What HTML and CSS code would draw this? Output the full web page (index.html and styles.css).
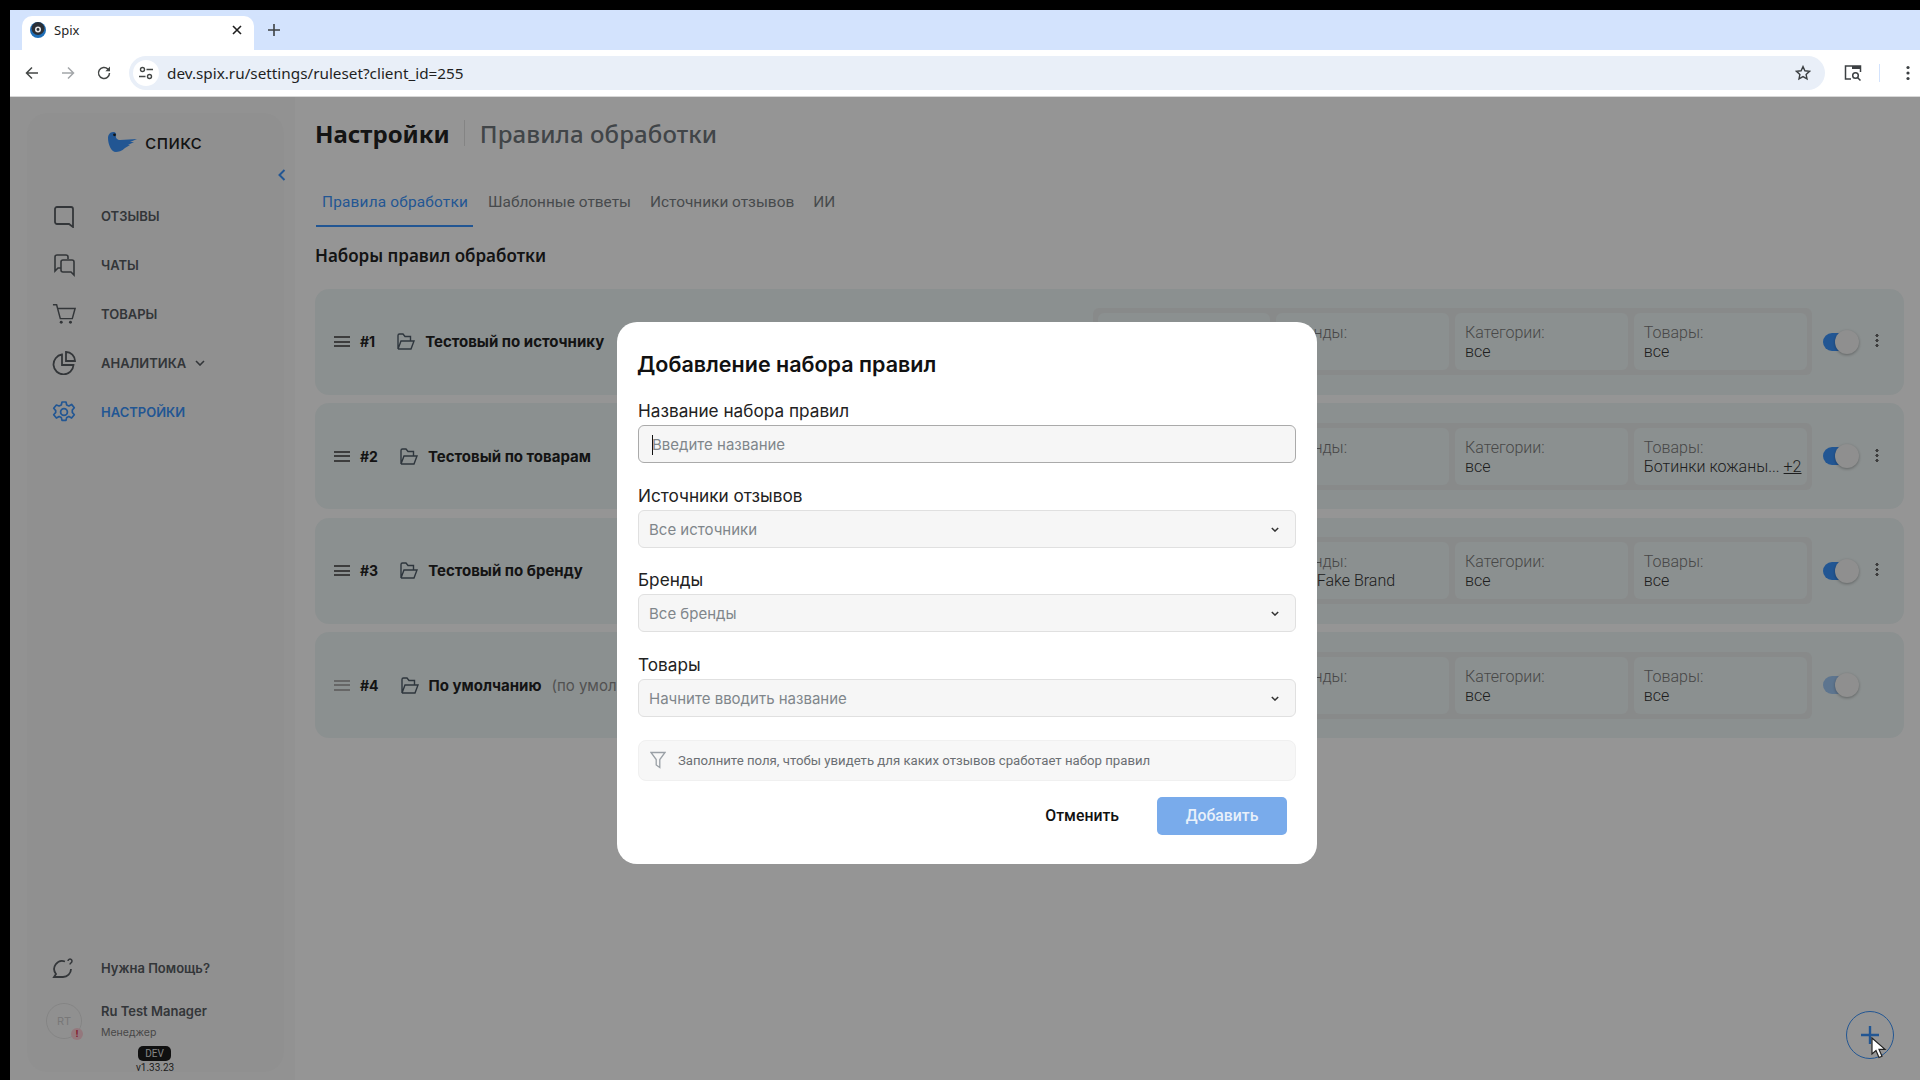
FILE: index.html
```html
<!DOCTYPE html>
<html lang="ru">

<head>
    <meta charset="UTF-8">
    <meta name="viewport" content="width=device-width, initial-scale=1.0">
    <title>Spix</title>
    <link rel="stylesheet" href="styles.css">
</head>

<body>
    <div class="browser">
        <div class="tabstrip">
            <div class="tab">
                <svg class="favicon" width="16" height="16" viewBox="0 0 16 16">
                    <circle cx="8" cy="8" r="8" fill="#1f6fb8" />
                    <circle cx="8" cy="6.5" r="6.5" fill="#2b2f36" />
                    <circle cx="8" cy="7.5" r="3" fill="#e8e8e8" />
                    <circle cx="8" cy="7.5" r="1.4" fill="#2b2f36" />
                </svg>
                <span class="tab-title">Spix</span>
                <svg class="tab-close" width="10" height="10" viewBox="0 0 10 10">
                    <path d="M1 1l8 8M9 1l-8 8" stroke="#1f1f1f" stroke-width="1.6" />
                </svg>
            </div>
            <svg class="tab-new" width="12" height="12" viewBox="0 0 12 12">
                <path d="M6 0v12M0 6h12" stroke="#3c4043" stroke-width="1.6" />
            </svg>
        </div>
        <div class="toolbar">
            <svg class="tool-icon" width="16" height="16" viewBox="0 0 16 16">
                <path d="M14 8H2.5M8 2.5L2.5 8 8 13.5" fill="none" stroke="#444746" stroke-width="1.5" />
            </svg>
            <svg class="tool-icon" width="16" height="16" viewBox="0 0 16 16">
                <path d="M2 8h11.5M8 2.5L13.5 8 8 13.5" fill="none" stroke="#a3a6a9" stroke-width="1.5" />
            </svg>
            <svg class="tool-icon" width="16" height="16" viewBox="0 0 16 16">
                <path d="M13.5 8a5.5 5.5 0 1 1-1.6-3.9L13.5 5.7" fill="none" stroke="#444746" stroke-width="1.5" />
                <path d="M14 1.6v4.6H9.4z" fill="#444746" />
            </svg>
            <div class="omnibox">
                <span class="site-btn">
                    <svg width="16" height="16" viewBox="0 0 16 16">
                        <circle cx="4.5" cy="4.5" r="2" fill="none" stroke="#444746" stroke-width="1.4" />
                        <circle cx="11.5" cy="11.5" r="2" fill="none" stroke="#444746" stroke-width="1.4" />
                        <path d="M8.5 4.5H15M1 11.5h6.5" stroke="#444746" stroke-width="1.4" />
                    </svg>
                </span>
                <span class="url">dev.spix.ru/settings/ruleset?client_id=255</span>
                <svg class="star" width="16" height="16" viewBox="0 0 16 16">
                    <path d="M8 1.6l1.9 4.2 4.6.5-3.4 3.1.9 4.5-4-2.3-4 2.3.9-4.5-3.4-3.1 4.6-.5z" fill="none"
                        stroke="#3c4043" stroke-width="1.4" />
                </svg>
            </div>
            <svg class="lens" width="18" height="18" viewBox="0 0 18 18">
                <path d="M7 15H1.5V2h15v6" fill="none" stroke="#3c4043" stroke-width="1.5" />
                <rect x="8" y="2" width="8.5" height="3" fill="#3c4043" />
                <circle cx="11.5" cy="11.5" r="2.8" fill="none" stroke="#3c4043" stroke-width="1.5" />
                <path d="M13.5 13.5l3 3" stroke="#3c4043" stroke-width="1.5" />
            </svg>
            <span class="tool-sep"></span>
            <svg class="more" width="4" height="16" viewBox="0 0 4 16">
                <circle cx="2" cy="2.5" r="1.6" fill="#3c4043" />
                <circle cx="2" cy="8" r="1.6" fill="#3c4043" />
                <circle cx="2" cy="13.5" r="1.6" fill="#3c4043" />
            </svg>
        </div>

        <div class="page">
            <aside class="sidebar">
                <div class="sidebar-card">
                    <div class="logo">
                        <svg width="29" height="20" viewBox="0 0 29 20">
                            <path d="M0 6C0 3 2 0 5 0c3 0 3.500 2 3 4-.5 2 1.500 4 4 4l17-1-7 3h4l-6 3h2l-5 3c-3 3-7 4-9 4C3 20 0 12 0 6z"
                                fill="#3a90f5" />
                            <circle cx="6.500" cy="2.800" r="1.400" fill="#222" />
                        </svg>
                        <span class="logo-text">спикс</span>
                    </div>
                    <span class="collapse">
                        <svg width="8" height="12" viewBox="0 0 8 12">
                            <path d="M6.5 1L1.5 6l5 5" fill="none" stroke="#3a90f5" stroke-width="2" />
                        </svg>
                    </span>
                    <nav class="nav">
                        <a class="nav-item">
                            <svg width="24" height="24" viewBox="0 0 24 24">
                                <path d="M5 3h14a2 2 0 0 1 2 2v18l-4-3H5a2 2 0 0 1-2-2V5a2 2 0 0 1 2-2z" fill="none"
                                    stroke="currentColor" stroke-width="1.8" />
                            </svg>
                            <span>Отзывы</span>
                        </a>
                        <a class="nav-item">
                            <svg width="24" height="24" viewBox="0 0 24 24">
                                <path d="M16 6V4a2 2 0 0 0-2-2H5a2 2 0 0 0-2 2v14l3-3h3" fill="none" stroke="currentColor"
                                    stroke-width="1.6" />
                                <path d="M11 7h9a2 2 0 0 1 2 2v13l-3-3h-8a2 2 0 0 1-2-2V9a2 2 0 0 1 2-2z" fill="none"
                                    stroke="currentColor" stroke-width="1.6" />
                            </svg>
                            <span>Чаты</span>
                        </a>
                        <a class="nav-item">
                            <svg width="26" height="24" viewBox="0 0 26 24">
                                <path d="M1 2h4l4 15h13l3-11H6" fill="none" stroke="currentColor" stroke-width="1.6" />
                                <circle cx="10" cy="21" r="1.6" fill="currentColor" />
                                <circle cx="20" cy="21" r="1.6" fill="currentColor" />
                            </svg>
                            <span>Товары</span>
                        </a>
                        <a class="nav-item">
                            <svg width="24" height="24" viewBox="0 0 24 24">
                                <path d="M10 3.500A10 10 0 1 0 21.500 14H10z" fill="none" stroke="currentColor" stroke-width="1.8" />
                                <path d="M14 1a9 9 0 0 1 9 9h-9z" fill="none" stroke="currentColor" stroke-width="1.8" />
                            </svg>
                            <span>Аналитика</span>
                            <svg class="nav-caret" width="10" height="6" viewBox="0 0 10 6">
                                <path d="M1 1l4 4 4-4" fill="none" stroke="currentColor" stroke-width="1.6" />
                            </svg>
                        </a>
                        <a class="nav-item active">
                            <svg width="24" height="24" viewBox="0 0 24 24">
                                <path d="M10 2h4l.7 3 2.200 1 2.700-1.600 2.700 3.300-2 2.300v2.400l2 2.300-2.700 3.300-2.700-1.600-2.200 1-.7 3h-4l-.7-3-2.200-1-2.700 1.600-2.700-3.300 2-2.300V10.600l-2-2.300 2.700-3.300L7.100 6l2.200-1z"
                                    fill="none" stroke="currentColor" stroke-width="1.7" stroke-linejoin="round" />
                                <circle cx="12" cy="12" r="3.400" fill="none" stroke="currentColor" stroke-width="1.8" />
                            </svg>
                            <span>Настройки</span>
                        </a>
                    </nav>
                    <div class="sidebar-bottom">
                        <a class="help">
                            <svg width="22" height="22" viewBox="0 0 22 22">
                                <path d="M13 4.500A8 8 0 0 0 4 17l-2 3h9a8 8 0 0 0 8-8" fill="none" stroke="currentColor"
                                    stroke-width="1.8" />
                                <path d="M16 4a2 2 0 1 1 3 1.800c-.8.5-1 .8-1 1.700" fill="none" stroke="currentColor"
                                    stroke-width="1.5" />
                            </svg>
                            <span>Нужна Помощь?</span>
                        </a>
                        <div class="user">
                            <div class="avatar">RT<span class="avatar-alert">!</span></div>
                            <div>
                                <div class="user-name">Ru Test Manager</div>
                                <div class="user-role">Менеджер</div>
                            </div>
                        </div>
                        <div class="dev-badge">DEV</div>
                        <div class="version">v1.33.23</div>
                    </div>
                </div>
            </aside>

            <main class="content">
                <header class="page-head">
                    <h1>Настройки</h1>
                    <span class="head-sep"></span>
                    <h2>Правила обработки</h2>
                </header>
                <div class="tabs">
                    <a class="tabs-item active">Правила обработки</a>
                    <a class="tabs-item">Шаблонные ответы</a>
                    <a class="tabs-item">Источники отзывов</a>
                    <a class="tabs-item">ИИ</a>
                </div>
                <h3 class="section-title">Наборы правил обработки</h3>
                <div class="rules">
                    <div class="rule">
                        <span class="burger"></span>
                        <span class="rule-num">#1</span>
                        <svg class="folder" width="19" height="17" viewBox="0 0 19 17">
                            <path d="M2 16h13l3-8H5l-3 8V2.500A1.500 1.500 0 0 1 3.500 1H7l2 2.500h5.500V8" fill="none" stroke="#4d5a66" stroke-width="1.400" />
                        </svg>
                        <span class="rule-name">Тестовый по источнику</span>
                        <div class="filters">
                            <div class="filter"><span class="filter-label">Источники:</span><span class="filter-value">все</span></div>
                            <div class="filter"><span class="filter-label">Бренды:</span><span class="filter-value">все</span></div>
                            <div class="filter"><span class="filter-label">Категории:</span><span class="filter-value">все</span></div>
                            <div class="filter"><span class="filter-label">Товары:</span><span class="filter-value">все</span></div>
                        </div>
                        <span class="toggle"></span>
                        <span class="kebab"></span>
                    </div>
                    <div class="rule">
                        <span class="burger"></span>
                        <span class="rule-num">#2</span>
                        <svg class="folder" width="19" height="17" viewBox="0 0 19 17">
                            <path d="M2 16h13l3-8H5l-3 8V2.500A1.500 1.500 0 0 1 3.500 1H7l2 2.500h5.500V8" fill="none" stroke="#4d5a66" stroke-width="1.400" />
                        </svg>
                        <span class="rule-name">Тестовый по товарам</span>
                        <div class="filters">
                            <div class="filter"><span class="filter-label">Источники:</span><span class="filter-value">все</span></div>
                            <div class="filter"><span class="filter-label">Бренды:</span><span class="filter-value">все</span></div>
                            <div class="filter"><span class="filter-label">Категории:</span><span class="filter-value">все</span></div>
                            <div class="filter"><span class="filter-label">Товары:</span><span class="filter-value">Ботинки кожаны... <u>+2</u></span></div>
                        </div>
                        <span class="toggle"></span>
                        <span class="kebab"></span>
                    </div>
                    <div class="rule">
                        <span class="burger"></span>
                        <span class="rule-num">#3</span>
                        <svg class="folder" width="19" height="17" viewBox="0 0 19 17">
                            <path d="M2 16h13l3-8H5l-3 8V2.500A1.500 1.500 0 0 1 3.500 1H7l2 2.500h5.500V8" fill="none" stroke="#4d5a66" stroke-width="1.400" />
                        </svg>
                        <span class="rule-name">Тестовый по бренду</span>
                        <div class="filters">
                            <div class="filter"><span class="filter-label">Источники:</span><span class="filter-value">все</span></div>
                            <div class="filter"><span class="filter-label">Бренды:</span><span class="filter-value">The Fake Brand</span></div>
                            <div class="filter"><span class="filter-label">Категории:</span><span class="filter-value">все</span></div>
                            <div class="filter"><span class="filter-label">Товары:</span><span class="filter-value">все</span></div>
                        </div>
                        <span class="toggle"></span>
                        <span class="kebab"></span>
                    </div>
                    <div class="rule">
                        <span class="burger muted"></span>
                        <span class="rule-num">#4</span>
                        <svg class="folder" width="19" height="17" viewBox="0 0 19 17">
                            <path d="M2 16h13l3-8H5l-3 8V2.500A1.500 1.500 0 0 1 3.500 1H7l2 2.500h5.500V8" fill="none" stroke="#4d5a66" stroke-width="1.400" />
                        </svg>
                        <span class="rule-name">По умолчанию</span>
                        <span class="rule-note">(по умолчанию)</span>
                        <div class="filters">
                            <div class="filter"><span class="filter-label">Источники:</span><span class="filter-value">все</span></div>
                            <div class="filter"><span class="filter-label">Бренды:</span><span class="filter-value">все</span></div>
                            <div class="filter"><span class="filter-label">Категории:</span><span class="filter-value">все</span></div>
                            <div class="filter"><span class="filter-label">Товары:</span><span class="filter-value">все</span></div>
                        </div>
                        <span class="toggle disabled"></span>
                        <span class="kebab hidden"></span>
                    </div>
                </div>
            </main>

            <button class="fab" type="button">
                <svg width="20" height="20" viewBox="0 0 20 20">
                    <path d="M10 1v18M1 10h18" stroke="#3a90f5" stroke-width="2.400" />
                </svg>
            </button>

            <div class="overlay">
                <div class="modal">
                    <h4 class="modal-title">Добавление набора правил</h4>
                    <label class="field-label">Название набора правил</label>
                    <div class="input focused"><span class="caret"></span>Введите название</div>
                    <label class="field-label">Источники отзывов</label>
                    <div class="input sources">Все источники
                        <svg width="8" height="5" viewBox="0 0 10 6"><path d="M1 1l4 4 4-4" fill="none" stroke="#333" stroke-width="1.800" /></svg>
                    </div>
                    <label class="field-label">Бренды</label>
                    <div class="input">Все бренды
                        <svg width="8" height="5" viewBox="0 0 10 6"><path d="M1 1l4 4 4-4" fill="none" stroke="#333" stroke-width="1.800" /></svg>
                    </div>
                    <label class="field-label">Товары</label>
                    <div class="input">Начните вводить название
                        <svg width="8" height="5" viewBox="0 0 10 6"><path d="M1 1l4 4 4-4" fill="none" stroke="#333" stroke-width="1.800" /></svg>
                    </div>
                    <div class="hint">
                        <svg width="16" height="18" viewBox="0 0 16 18">
                            <path d="M1 1.500h14L9.800 8.500V16.500L6.200 14V8.500z" fill="none" stroke="#9aa0a6" stroke-width="1.300" />
                        </svg>
                        <span>Заполните поля, чтобы увидеть для каких отзывов сработает набор правил</span>
                    </div>
                    <div class="modal-actions">
                        <button class="btn-cancel" type="button">Отменить</button>
                        <button class="btn-add" type="button">Добавить</button>
                    </div>
                </div>
            </div>

            <svg class="cursor" width="16" height="22" viewBox="0 0 16 22">
                <path d="M1 1v16l4-3.500 3 7 3-1.300-3-6.800h6z" fill="#fff" stroke="#222" stroke-width="1.200" />
            </svg>
        </div>
    </div>
</body>

</html>
```

FILE: styles.css
```css
* {
    box-sizing: border-box;
}

html,
body {
    height: 100%;
    margin: 0;
}

body {
    background-color: #000;
    padding: 10px 0 0 10px;
    font-family: Roboto, "Noto Sans", sans-serif;
    overflow: hidden;
}

.browser {
    height: 100%;
    display: flex;
    flex-direction: column;
}

/* browser chrome */
.tabstrip {
    height: 40px;
    flex: none;
    background-color: #d3e3fd;
    display: flex;
    align-items: center;
    padding-left: 12px;
}

.tab {
    width: 232px;
    height: 34px;
    margin-top: 6px;
    background-color: #fff;
    border-radius: 10px 10px 0 0;
    display: flex;
    align-items: center;
    padding: 0 12px 6px 8px;
}

.favicon {
    flex: none;
}

.tab-title {
    margin-left: 8px;
    flex: 1;
    font-family: "Noto Sans", sans-serif;
    font-size: 13px;
    color: #1f1f1f;
}

.tab-new {
    margin-left: 14px;
    margin-top: -1px;
}

.toolbar {
    height: 47px;
    flex: none;
    background-color: #fff;
    border-bottom: 1px solid #d8d8d8;
    display: flex;
    align-items: center;
    padding: 0 0 1px 14px;
}

.tool-icon {
    margin-right: 20px;
}

.tool-icon:nth-child(3) {
    margin-right: 17px;
}

.omnibox {
    width: 1696px;
    height: 34px;
    flex: none;
    background-color: #e9eff8;
    border-radius: 17px;
    display: flex;
    align-items: center;
    padding: 0 14px 0 4px;
}

.site-btn {
    width: 26px;
    height: 26px;
    background-color: #fff;
    border-radius: 50%;
    display: flex;
    align-items: center;
    justify-content: center;
}

.url {
    margin-left: 8px;
    flex: 1;
    font-family: "Noto Sans", sans-serif;
    font-size: 15.300px;
    color: #1f1f1f;
}

.lens {
    margin-left: 19px;
}

.tool-sep {
    width: 1px;
    height: 18px;
    margin-left: 17px;
    background-color: #d3e3fd;
}

.more {
    margin-left: 26px;
}

/* page */
.page {
    position: relative;
    flex: 1;
    display: flex;
    background-color: #f9f9f9;
    min-height: 0;
}

.sidebar {
    width: 285px;
    flex: none;
    background-color: #f4f4f4;
    padding: 16px 11px 8px 17px;
}

.sidebar-card {
    position: relative;
    height: 100%;
    background-color: #f1f1f1;
    border-radius: 20px;
    display: flex;
    flex-direction: column;
    padding: 0 0 0 25px;
}

.logo {
    height: 58px;
    display: flex;
    align-items: center;
    gap: 8px;
    margin: 0 0 0 56px;
}

.logo-text {
    font-family: Inter, sans-serif;
    font-size: 20px;
    color: #222;
}

.collapse {
    position: absolute;
    top: 53px;
    right: -2px;
}

.nav {
    margin-top: 20px;
    display: flex;
    flex-direction: column;
}

.nav-item {
    height: 49px;
    display: flex;
    align-items: center;
    color: #555a5f;
    font-family: Inter, sans-serif;
    font-size: 13px;
    font-weight: 600;
    text-transform: uppercase;
}

.nav-item > svg:first-child {
    width: 24px;
    flex: none;
    margin-right: 25px;
}

.nav-caret {
    margin-left: 9px;
}

.nav-item.active {
    color: #3a90f5;
}

.sidebar-bottom {
    margin-top: auto;
    margin-bottom: -1px;
    position: relative;
}

.help {
    display: flex;
    align-items: center;
    gap: 27px;
    color: #555a5f;
    font-family: Inter, sans-serif;
    font-size: 13px;
    font-weight: 600;
}

.user {
    margin-top: 24.500px;
    margin-left: -6px;
    display: flex;
    align-items: center;
    gap: 19px;
}

.avatar {
    position: relative;
    width: 36px;
    height: 36px;
    border: 1px solid #ddd;
    border-radius: 50%;
    display: flex;
    align-items: center;
    justify-content: center;
    color: #c8c8c8;
    font-family: Inter, sans-serif;
    font-size: 11px;
}

.avatar-alert {
    position: absolute;
    right: -2px;
    bottom: -2px;
    width: 12px;
    height: 12px;
    border-radius: 50%;
    background-color: #f7c9d0;
    color: #d9304f;
    font-size: 9px;
    font-weight: 700;
    text-align: center;
    line-height: 12px;
}

.user-name {
    font-family: Inter, sans-serif;
    font-size: 13px;
    font-weight: 600;
    color: #555a5f;
}

.user-role {
    margin-top: 7px;
    font-family: Inter, sans-serif;
    font-size: 10.500px;
    color: #777;
}

.dev-badge {
    width: 33px;
    height: 15px;
    margin: 7px 0 1px 86px;
    background-color: #1c1c1c;
    color: #ddd;
    border-radius: 5px;
    font-size: 10px;
    line-height: 15px;
    text-align: center;
}

.version {
    margin-left: 84px;
    width: 37px;
    font-size: 10px;
    color: #333;
    text-align: center;
    white-space: nowrap;
}

.content {
    flex: 1;
    min-width: 0;
    padding: 0 16px 0 20px;
}

.page-head {
    height: 62px;
    display: flex;
    align-items: center;
    margin-top: 5px;
    font-family: "Noto Sans", sans-serif;
}

.page-head h1 {
    margin: 0;
    font-size: 24px;
    font-weight: 700;
    color: #222;
}

.head-sep {
    width: 1px;
    height: 26px;
    margin: 0 15px 0 14px;
    background-color: #ddd;
}

.page-head h2 {
    margin: 0;
    font-size: 24px;
    font-weight: 500;
    letter-spacing: 0.1px;
    color: #6d7378;
}

.tabs {
    margin-top: 1px;
    margin-left: 1px;
    height: 62px;
    display: flex;
    align-items: flex-end;
    font-family: Roboto, sans-serif;
    font-size: 15.400px;
}

.tabs-item {
    height: 54px;
    padding: 19.500px 6px 0;
    margin-right: 7px;
    color: #777c80;
}

.tabs-item.active {
    padding-right: 5px;
    margin-right: 9px;
    letter-spacing: 0.2px;
    color: #3a90f5;
    border-bottom: 2px solid #3a90f5;
}

.section-title {
    margin: 17px 0 21.600px;
    font-family: "Noto Sans", sans-serif;
    font-size: 17px;
    font-weight: 600;
    color: #222;
}

.rules {
    display: flex;
    flex-direction: column;
    gap: 8.500px;
}

.rule {
    height: 106px;
    background-color: #e8f0f0;
    border-radius: 14px;
    display: flex;
    align-items: center;
    padding: 0 25px 0 19px;
}

.burger {
    width: 16px;
    height: 11px;
    flex: none;
    border-top: 2px solid #666;
    border-bottom: 2px solid #666;
    position: relative;
}

.burger::after {
    content: "";
    position: absolute;
    left: 0;
    right: 0;
    top: 2.500px;
    height: 2px;
    background-color: #666;
}

.burger.muted,
.burger.muted::after {
    border-color: #aaa;
}

.burger.muted::after {
    background-color: #aaa;
}

.rule-num {
    margin-left: 10px;
    font-family: Inter, sans-serif;
    font-size: 14px;
    font-weight: 700;
    color: #222;
}

.folder {
    margin-left: 21px;
    flex: none;
}

.rule-name {
    margin-left: 10px;
    font-family: Inter, sans-serif;
    font-size: 15px;
    font-weight: 700;
    color: #222;
}

.rule-note {
    margin-left: 10px;
    font-family: Inter, sans-serif;
    font-size: 15px;
    color: #888;
    white-space: nowrap;
}

.filters {
    width: 719px;
    margin-left: auto;
    padding: 5px;
    display: flex;
    gap: 6px;
    background-color: #e3e6e6;
    border-radius: 6px;
}

.filter {
    flex: 1;
    min-width: 0;
    height: 57px;
    padding: 10px 10px 0;
    background-color: #e8f0f0;
    border-radius: 6px;
    display: flex;
    flex-direction: column;
    font-size: 16px;
    line-height: 19px;
    font-weight: 300;
    white-space: nowrap;
}

.filter-label {
    color: #777;
}

.filter-value {
    color: #333;
}

.toggle {
    position: relative;
    width: 30px;
    height: 18px;
    margin-left: 11px;
    flex: none;
    background-color: #3a90f5;
    border-radius: 9px;
}

.toggle::after {
    content: "";
    position: absolute;
    left: 12.500px;
    top: -3px;
    width: 24px;
    height: 24px;
    border-radius: 50%;
    background-color: #eee;
    box-shadow: 0 1px 3px rgba(0, 0, 0, 0.3);
}

.toggle.disabled {
    background-color: #9cc3ee;
}

.kebab {
    width: 4px;
    height: 14px;
    margin: -3px 0 0 22.500px;
    flex: none;
    background: radial-gradient(circle, #666 1.400px, transparent 1.800px) 0 0 / 4px 5px repeat-y;
}

.kebab.hidden {
    visibility: hidden;
}

.fab {
    position: absolute;
    right: 26px;
    bottom: 21px;
    width: 48px;
    height: 48px;
    padding: 0;
    background: none;
    border: 1.500px solid #3a90f5;
    border-radius: 50%;
    display: flex;
    align-items: center;
    justify-content: center;
}

.overlay {
    position: absolute;
    inset: 0;
    background-color: rgba(0, 0, 0, 0.4);
    display: flex;
    justify-content: center;
    align-items: flex-start;
    padding: 225px 0 0 4px;
}

.modal {
    width: 700px;
    height: 542px;
    background-color: #fff;
    border-radius: 20px;
    padding: 26px 21px 0 21px;
    font-family: Inter, sans-serif;
}

.modal-title {
    margin: 0 0 20.500px -1px;
    font-size: 21.500px;
    font-weight: 600;
    color: #111;
    line-height: 32px;
}

.field-label {
    display: block;
    font-size: 17.200px;
    line-height: 20px;
    color: #222;
    margin-bottom: 4.500px;
}

.input {
    position: relative;
    height: 38px;
    margin-bottom: 22.500px;
    padding: 0 16px 0 10px;
    background-color: #f6f6f6;
    border: 1px solid #e0e0e0;
    border-radius: 6px;
    display: flex;
    align-items: center;
    justify-content: space-between;
    font-size: 15px;
    color: #80868b;
}

.input.sources {
    margin-bottom: 21.500px;
}

.input.focused {
    justify-content: flex-start;
    padding-left: 13px;
    border-color: #aaa;
}

.caret {
    position: absolute;
    left: 13px;
    top: 9px;
    height: 20px;
    width: 1px;
    background-color: #111;
}

.hint {
    height: 41px;
    margin-top: 18px;
    padding-left: 11px;
    background-color: #f7f7f7;
    border: 1px solid #f0f0f0;
    border-radius: 8px;
    display: flex;
    align-items: center;
    gap: 12px;
    font-family: Roboto, sans-serif;
    font-size: 13.200px;
    color: #6b6f73;
}

.modal-actions {
    margin-top: 16px;
    padding-right: 9px;
    display: flex;
    justify-content: flex-end;
    gap: 38px;
}

.modal-actions button {
    height: 38px;
    border: none;
    padding: 0;
    font-family: Roboto, sans-serif;
    font-size: 15.800px;
    font-weight: 500;
}

.btn-cancel {
    background: none;
    color: #111;
}

.btn-add {
    width: 130px;
    background-color: #79abeb;
    color: #e8f0fa;
    border-radius: 5px;
}

.cursor {
    position: absolute;
    right: 33px;
    bottom: 21px;
}
```
